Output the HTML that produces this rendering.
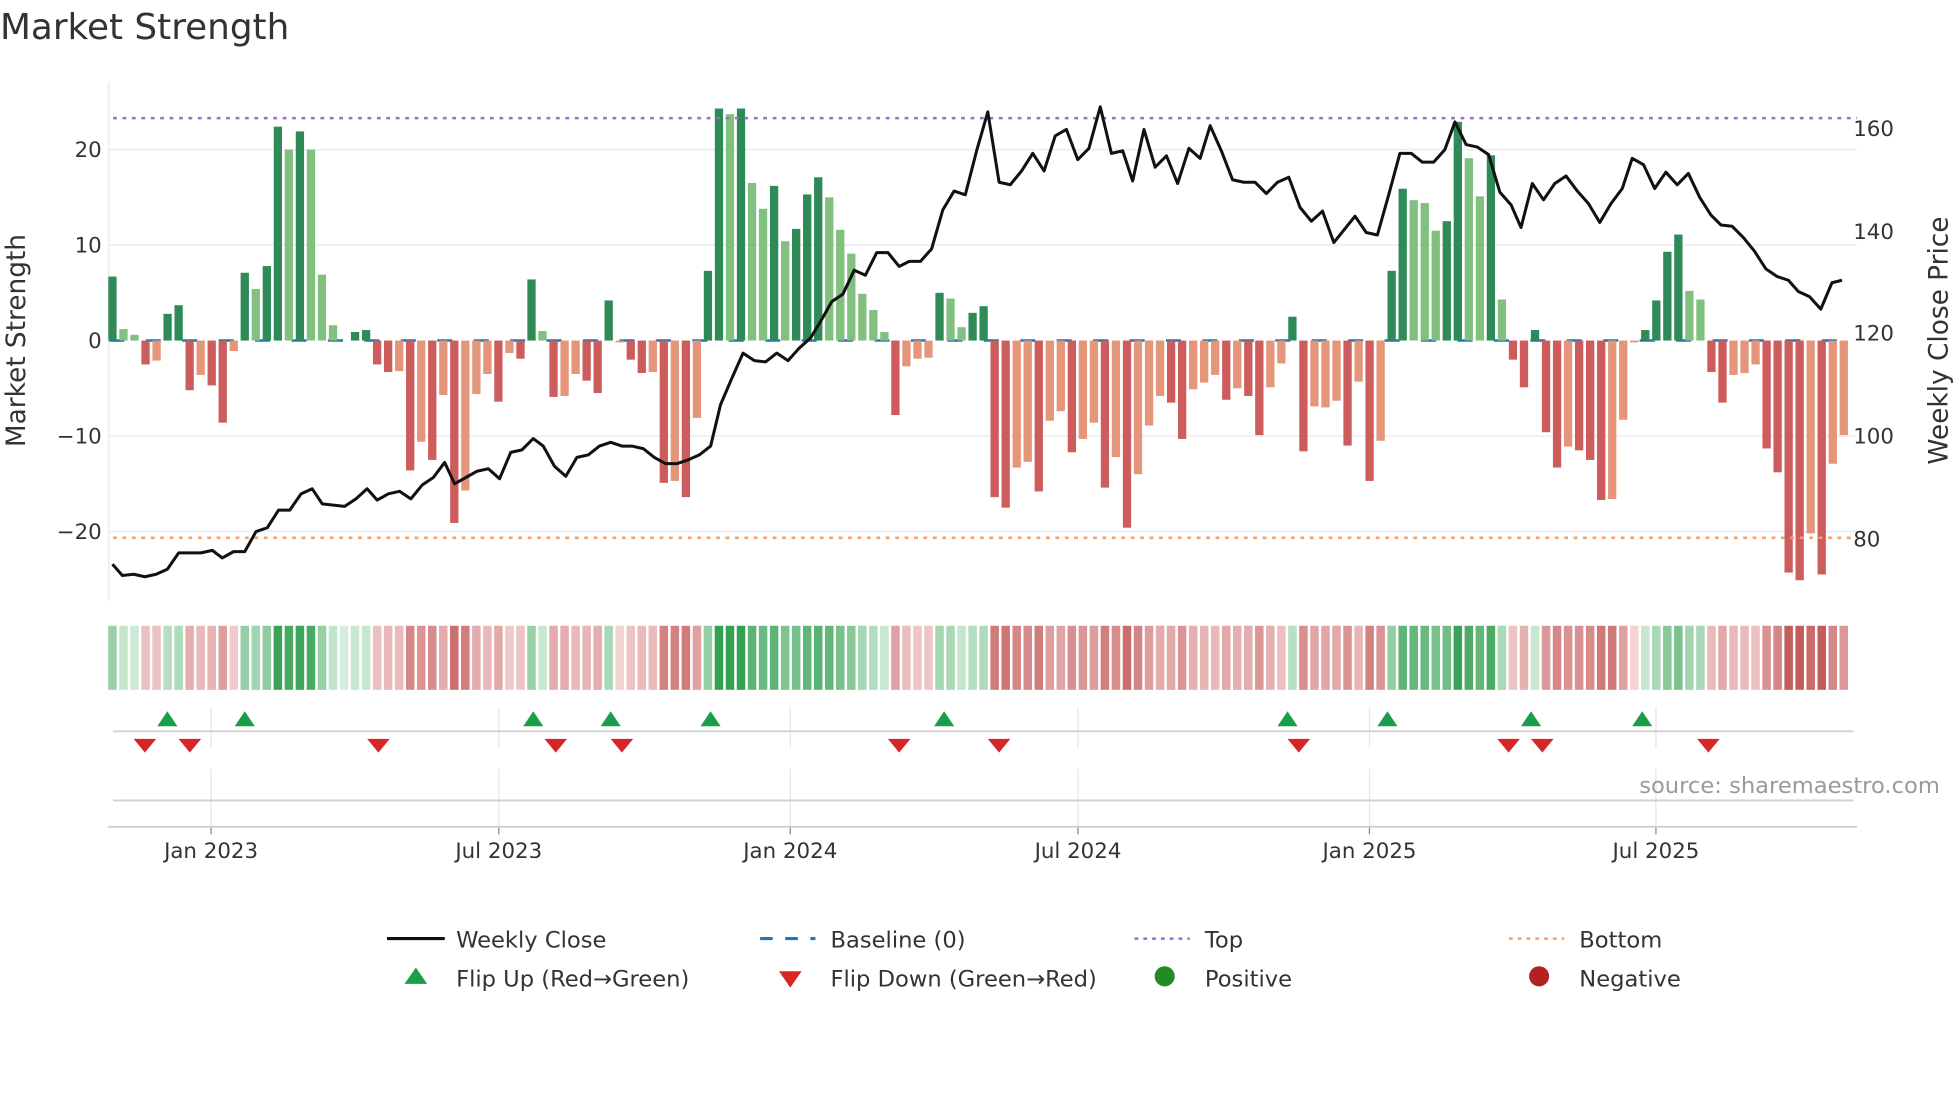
<!DOCTYPE html>
<html><head><meta charset="utf-8"><style>
html,body{margin:0;padding:0;background:#fff;}
svg{display:block;}
text{font-family:"DejaVu Sans","Liberation Sans",sans-serif;fill:#333;}
</style></head><body>
<svg id="s" width="1960" height="1102" viewBox="0 0 1560 877" xmlns="http://www.w3.org/2000/svg">
<rect width="1560" height="877" fill="#fff"/>
<text x="0" y="31" font-size="28.5" fill="#333">Market Strength</text>
<g id="grid"></g>
<g id="bars"></g>
<g id="lines"></g>
<g id="strip"></g>
<g id="marks"></g>
<g font-size="17" text-anchor="end">
<text x="81" y="125">20</text>
<text x="81" y="201">10</text>
<text x="81" y="277">0</text>
<text x="81" y="353">−10</text>
<text x="81" y="429">−20</text>
</g>
<g font-size="17">
<text x="1475" y="108">160</text>
<text x="1475" y="190">140</text>
<text x="1475" y="271">120</text>
<text x="1475" y="353">100</text>
<text x="1475" y="435">80</text>
</g>
<text transform="translate(20,271) rotate(-90)" font-size="21" text-anchor="middle">Market Strength</text>
<text transform="translate(1550,271) rotate(-90)" font-size="21" text-anchor="middle">Weekly Close Price</text>
<text x="1544" y="631" font-size="18" text-anchor="end" style="fill:#9a9a9a">source: sharemaestro.com</text>
<g font-size="17" text-anchor="middle">
<text x="168" y="683">Jan 2023</text>
<text x="397" y="683">Jul 2023</text>
<text x="629" y="683">Jan 2024</text>
<text x="858" y="683">Jul 2024</text>
<text x="1090" y="683">Jan 2025</text>
<text x="1318" y="683">Jul 2025</text>
</g>
<g font-size="18" transform="translate(-2,-5)">
<line x1="310" y1="752" x2="356" y2="752" stroke="#111" stroke-width="2.5"/>
<text x="365" y="759">Weekly Close</text>
<line x1="607" y1="752" x2="651" y2="752" stroke="#1f77b4" stroke-width="2.5" stroke-dasharray="10,10"/>
<text x="663" y="759">Baseline (0)</text>
<line x1="905" y1="752" x2="949" y2="752" stroke="#9b6bd8" stroke-width="2" stroke-dasharray="3,4"/>
<text x="961" y="759">Top</text>
<line x1="1203" y1="752" x2="1247" y2="752" stroke="#f0a26a" stroke-width="2" stroke-dasharray="3,4"/>
<text x="1259" y="759">Bottom</text>
<polygon points="324,788 342,788 333,775" fill="#1a9e4a"/>
<text x="365" y="790">Flip Up (Red→Green)</text>
<polygon points="622,778 640,778 631,791" fill="#d62728"/>
<text x="663" y="790">Flip Down (Green→Red)</text>
<circle cx="929" cy="782" r="8" fill="#228b22"/>
<text x="961" y="790">Positive</text>
<circle cx="1227" cy="782" r="8" fill="#b22222"/>
<text x="1259" y="790">Negative</text>
</g>
</svg>
<script>
var NS="http://www.w3.org/2000/svg";
function el(p,t,a){var e=document.createElementNS(NS,t);for(var k in a)e.setAttribute(k,a[k]);document.getElementById(p).appendChild(e);return e;}
var V="6.7D 1.2L 0.6L -2.5R -2.1S 2.8D 3.7D -5.2R -3.6S -4.7R -8.6R -1.1S 7.1D 5.4L 7.8D 22.4D 20L 21.9D 20L 6.9L 1.6L 0Z 0.9D 1.1D -2.5R -3.3R -3.2S -13.6R -10.6S -12.5R -5.7S -19.1R -15.7S -5.6S -3.5S -6.4R -1.3S -1.9R 6.4D 1L -5.9R -5.8S -3.5S -4.2R -5.5R 4.2D -0.2S -2R -3.4R -3.3S -14.9R -14.7S -16.4R -8.1S 7.3D 24.3D 23.7L 24.3D 16.5L 13.8L 16.2D 10.4L 11.7D 15.3D 17.1D 15L 11.6L 9.1L 4.9L 3.2L 0.9L -7.8R -2.7S -1.9S -1.8S 5D 4.4L 1.4L 2.9D 3.6D -16.4R -17.5R -13.3S -12.7S -15.8R -8.4S -7.4S -11.7R -10.3S -8.6S -15.4R -12.2S -19.6R -14S -8.9S -5.8S -6.5R -10.3R -5.1S -4.4S -3.6S -6.2R -5S -5.8R -9.9R -4.9S -2.4S 2.5D -11.6R -6.9S -7S -6.3S -11R -4.3S -14.7R -10.5S 7.3D 15.9D 14.7L 14.4L 11.5L 12.5D 22.9D 19.1L 15.1L 19.4D 4.3L -2R -4.9R 1.1D -9.6R -13.3R -11.1S -11.5R -12.5R -16.7R -16.6S -8.3S -0.2S 1.1D 4.2D 9.3D 11.1D 5.2L 4.3L -3.3R -6.5R -3.6S -3.4S -2.5S -11.3R -13.8R -24.3R -25.1R -20.2S -24.5R -12.9S -9.9S".split(" ");
var N=V.length,x0=89.5,x1=1467.5,dx=(x1-x0)/(N-1),z=271,u=7.6;
var col={D:"#2e8b57",L:"#82c07f",R:"#cd5c5c",S:"#e5967a",Z:"#fff"};
[119,195,347,423].forEach(function(y){el("grid","line",{x1:87,x2:1478,y1:y,y2:y,stroke:"#ebebf2","stroke-width":1.2});});
el("grid","line",{x1:86.5,x2:86.5,y1:65,y2:478,stroke:"#ebebf2","stroke-width":1.2});
[168,397,629,858,1090,1318].forEach(function(x){
 el("grid","line",{x1:x,x2:x,y1:563,y2:595,stroke:"#e4e4ea","stroke-width":1});
 el("grid","line",{x1:x,x2:x,y1:612,y2:658,stroke:"#e4e4ea","stroke-width":1});
 el("grid","line",{x1:x,x2:x,y1:658,y2:664,stroke:"#888","stroke-width":1});
});
el("grid","line",{x1:90,x2:1475,y1:582,y2:582,stroke:"#d0d0d0","stroke-width":1.5});
el("grid","line",{x1:90,x2:1475,y1:637,y2:637,stroke:"#d0d0d0","stroke-width":1.5});
el("grid","line",{x1:86,x2:1478,y1:658,y2:658,stroke:"#d0d0d0","stroke-width":1.5});
el("grid","line",{x1:87,x2:1478,y1:z,y2:z,stroke:"#1f77b4","stroke-width":2,"stroke-dasharray":"12,17"});
V.forEach(function(s,i){
 var v=parseFloat(s),c=s.slice(-1),x=x0+i*dx;
 var h=Math.abs(v)*u;
 if(h>0.5) el("bars","rect",{x:x-3.3,y:v>0?z-h:z,width:6.6,height:h,fill:col[c]});
 var t=Math.pow(Math.min(Math.abs(v)/24,1),0.75),a,b;
 if(v>=0){a=[214,238,220];b=[52,160,82];}else{a=[245,214,214];b=[196,92,92];}
 var r=a.map(function(q,k){return Math.round(q+(b[k]-q)*t);});
 el("strip","rect",{x:x-dx/2+1,y:498,width:dx-2,height:51,fill:"rgb("+r.join(",")+")"});
});
el("lines","line",{x1:90,x2:1478,y1:94,y2:94,stroke:"#9b6bd8","stroke-width":2,"stroke-dasharray":"3,4.5"});
el("lines","line",{x1:90,x2:1478,y1:428,y2:428,stroke:"#f0a26a","stroke-width":2,"stroke-dasharray":"3,4.5"});
var P=[90,449,98,458,107,457,116,459,125,457,134,453,143,440,152,440,161,440,170,438,178,444,187,439,196,439,205,423,214,420,223,406,232,406,241,393,250,389,258,401,267,402,276,403,285,397,294,389,302,398,311,393,320,391,329,397,338,386,347,380,356,368,364,385,373,380,382,375,391,373,400,381,409,360,418,358,427,349,435,355,444,371,453,379,462,364,471,362,480,355,489,352,498,355,506,355,515,357,524,364,533,369,542,369,551,366,560,362,569,355,577,322,586,301,595,281,604,287,613,288,622,281,631,287,640,277,649,269,657,256,666,240,675,234,684,215,693,219,702,201,711,201,720,212,728,208,737,208,746,198,755,167,764,152,773,155,782,120,791,89,800,145,809,147,818,136,827,122,836,136,845,108,854,103,863,127,872,118,881,85,890,122,899,120,907,144,916,103,925,133,934,124,943,146,952,118,961,126,969,100,978,120,987,143,996,145,1005,145,1014,154,1023,145,1032,141,1041,165,1050,176,1059,168,1068,193,1077,182,1085,172,1094,185,1103,187,1112,155,1121,122,1130,122,1139,129,1148,129,1157,119,1165,97,1174,115,1183,117,1192,123,1201,153,1210,163,1218,181,1227,146,1236,159,1245,146,1254,140,1263,152,1272,162,1281,177,1290,162,1299,150,1307,126,1316,131,1325,150,1334,137,1343,147,1352,138,1361,157,1370,171,1378,179,1387,180,1396,189,1405,200,1414,214,1423,220,1432,223,1440,232,1449,236,1458,246,1467,225,1475,223];
function cx(x){return 168+(x-168)*(1150/1157)-1;}
var d="";for(var i=0;i<P.length;i+=2){d+=(i?"L":"M")+cx(P[i]).toFixed(1)+","+P[i+1];}
el("lines","path",{d:d,fill:"none",stroke:"#111","stroke-width":2.4,"stroke-linejoin":"round"});
[134,196,427,489,569,756,1031,1111,1226,1315].forEach(function(x){x=cx(x);el("marks","polygon",{points:(x-8)+",578 "+(x+8)+",578 "+x+",566",fill:"#1a9e4a"});});
[116,152,303,445,498,720,800,1040,1208,1235,1368].forEach(function(x){x=cx(x);el("marks","polygon",{points:(x-9)+",588 "+(x+9)+",588 "+x+",599",fill:"#d62728"});});
</script>
</body></html>
